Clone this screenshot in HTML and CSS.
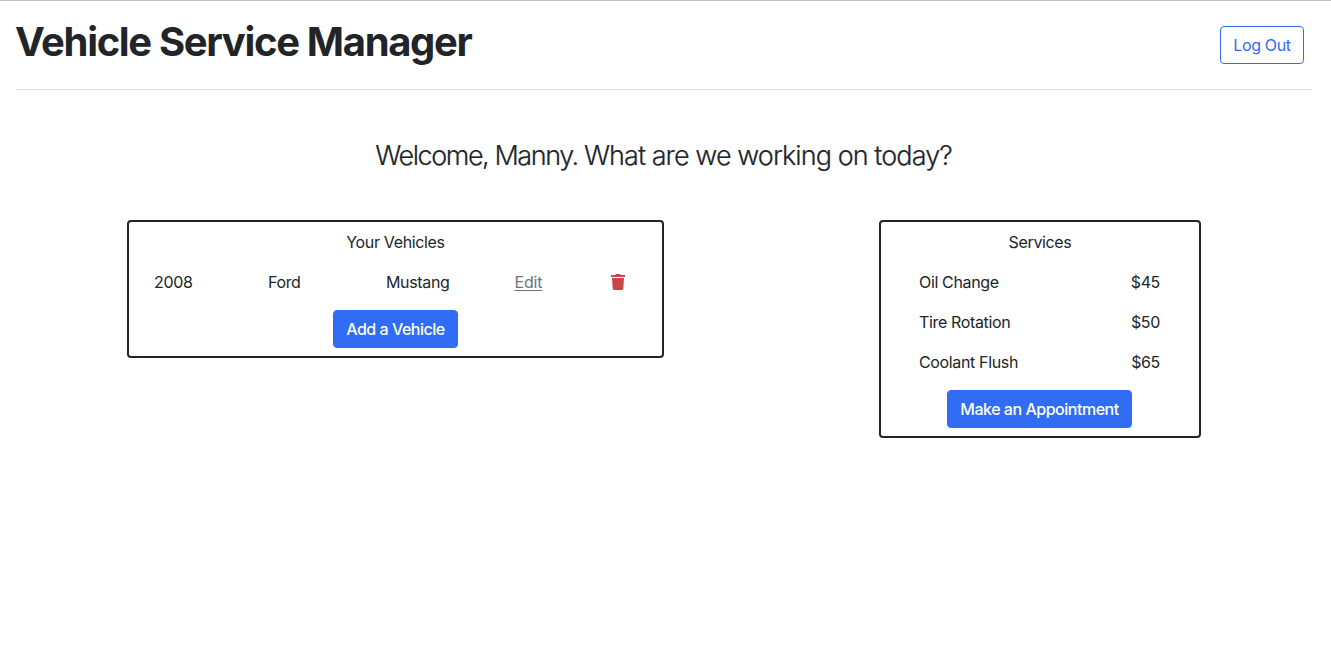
FILE: index.html
```
<!DOCTYPE html>
<html lang="en">
<head>
<meta charset="utf-8">
<title>Vehicle Service Manager</title>
<link rel="stylesheet" href="styles.css">
</head>
<body>
<header class="header">
  <h1 class="title">Vehicle Service Manager</h1>
  <button class="btn btn-outline">Log Out</button>
</header>
<main>
  <h2 class="welcome"><span class="greeting">Welcome, Manny. </span>What are we working on today?</h2>
  <div class="panels">
    <section class="panel vehicles">
      <div class="panel-title">Your Vehicles</div>
      <div class="vehicle-row">
        <span class="year">2008</span>
        <span class="make">Ford</span>
        <span>Mustang</span>
        <a class="edit" href="#">Edit</a>
        <svg class="trash" width="14" height="16" viewBox="0 0 448 512"><path fill="currentColor" d="M432 32H312l-9.400-18.700A24 24 0 0 0 281.100 0H166.800a23.720 23.720 0 0 0-21.400 13.300L136 32H16A16 16 0 0 0 0 48v32a16 16 0 0 0 16 16h416a16 16 0 0 0 16-16V48a16 16 0 0 0-16-16zM32 128l21.200 339a48 48 0 0 0 47.900 45h245.800a48 48 0 0 0 47.900-45L416 128z"/></svg>
      </div>
      <button class="btn btn-primary add">Add a Vehicle</button>
    </section>
    <section class="panel services">
      <div class="panel-title">Services</div>
      <div class="service-row"><span>Oil Change</span><span>$45</span></div>
      <div class="service-row"><span>Tire Rotation</span><span>$50</span></div>
      <div class="service-row"><span>Coolant Flush</span><span>$65</span></div>
      <button class="btn btn-primary book">Make an Appointment</button>
    </section>
  </div>
</main>
</body>
</html>
```
FILE: styles.css
```
* { box-sizing: border-box; }
body {
  margin: 0;
  min-height: 657px;
  border-top: 1px solid #c1c1c1;
  background: #fff;
  color: #212529;
  font: 400 16px/24px Inter, "Liberation Sans", sans-serif;
  letter-spacing: -0.35px;
}
.header {
  display: flex;
  justify-content: space-between;
  align-items: flex-start;
  height: 89px;
  margin: 0 19px 0 16px;
  padding-right: 8px;
  border-bottom: 1px solid #dee2e6;
}
.title {
  margin: 17px 0 0 -1px;
  font-size: 40px;
  line-height: 48px;
  font-weight: 700;
  letter-spacing: -1.34px;
}
.btn {
  height: 38px;
  padding: 0;
  border: 1px solid #316cf4;
  border-radius: 4px;
  font: inherit;
  letter-spacing: inherit;
  white-space: nowrap;
}
.btn-outline { width: 84px; margin-top: 25px; background: #fff; color: #316cf4; }
.btn-primary { margin: 8px 0; background: #316cf4; color: #fff; font-weight: 500; letter-spacing: -0.48px; }
.welcome {
  margin: 49px 4px 0 0;
  text-align: center;
  font-size: 27px;
  line-height: 34px;
  font-weight: 300;
  letter-spacing: -0.93px;
  -webkit-text-stroke: 0.2px currentColor;
}
.greeting { letter-spacing: -1.44px; }
.panels { display: flex; align-items: flex-start; gap: 215px; margin: 47px 0 0 127px; }
.panel {
  display: flex;
  flex-direction: column;
  align-items: center;
  border: 2px solid #212529;
  border-radius: 4px;
}
.vehicles { width: 537px; }
.services { width: 322px; }
.panel-title { padding: 8px 0; }
.vehicle-row {
  display: grid;
  grid-template-columns: 114px 118px 128.500px 96px 1fr;
  align-items: center;
  width: 100%;
  height: 40px;
  padding-left: 25px;
}
.edit { color: #6c757d; letter-spacing: -0.15px; text-underline-offset: 2px; }
.trash { display: block; color: #cb444a; }
.service-row {
  display: flex;
  justify-content: space-between;
  width: 100%;
  padding: 8px 39px 8px 38px;
}
.add { width: 125px; }
.book { width: 185px; margin-right: 1px; }
```
